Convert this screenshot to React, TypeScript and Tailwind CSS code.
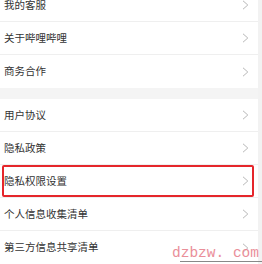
const groupA = ["我的客服", "关于哔哩哔哩", "商务合作"];
const groupB = ["用户协议", "隐私政策", "隐私权限设置", "个人信息收集清单", "第三方信息共享清单"];

function Chevron() {
  return (
    <svg width="7" height="10" viewBox="0 0 7 10" fill="none" className="shrink-0">
      <path d="M1 0.8 L5.8 5 L1 9.2" stroke="#b8b8b8" strokeWidth="1" />
    </svg>
  );
}

function Row({ label, last, highlight }: { label: string; last?: boolean; highlight?: boolean }) {
  return (
    <div
      className={`relative flex h-[33px] items-center justify-between pl-[4px] pr-[9px] ${
        last ? "" : "border-b border-[#efefef]"
      }`}
    >
      <span className="text-[10.5px] leading-none text-[#333]">{label}</span>
      <Chevron />
      {highlight && (
        <div className="absolute left-[2px] right-[4px] top-0 h-[32px] rounded-[2px] border-2 border-[#e5262b]" />
      )}
    </div>
  );
}

export default function App() {
  return (
    <div
      className="relative h-[264px] w-[262px] overflow-hidden bg-[#f2f2f2]"
      style={{ fontFamily: '"Noto Sans CJK SC", "Noto Sans", sans-serif' }}
    >
      <div className="mr-[4px] mt-[-11px] bg-white">
        {groupA.map((l, i) => (
          <Row key={l} label={l} last={i === groupA.length - 1} />
        ))}
      </div>
      <div className="mr-[4px] h-[11px] bg-[#f4f4f4]" />
      <div className="mr-[4px] bg-white">
        {groupB.map((l, i) => (
          <Row key={l} label={l} last={i === groupB.length - 1} highlight={l === "隐私权限设置"} />
        ))}
      </div>
      <div className="absolute bottom-[4px] left-[172px] font-['Liberation_Mono',monospace] text-[14.5px] leading-none text-[#e8838f] opacity-90">
        dzbzw. com
      </div>
      <div className="absolute bottom-[2px] left-[180px] h-px w-[82px] bg-[#888]" />
    </div>
  );
}
